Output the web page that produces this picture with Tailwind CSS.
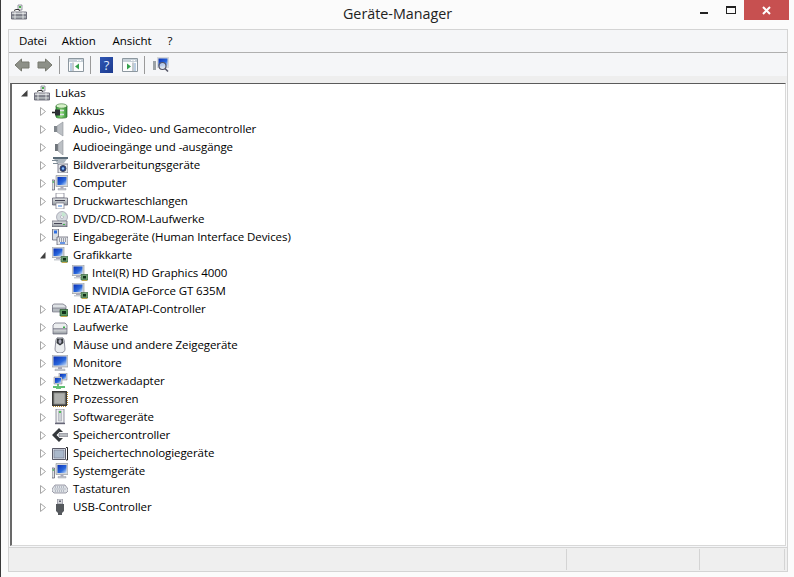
<!DOCTYPE html>
<html lang="de">
<head>
  <meta charset="UTF-8" />
  <title>Geräte-Manager</title>
  <script src="https://cdn.jsdelivr.net/npm/@tailwindcss/browser@4"></script>
</head>
<body class="overflow-hidden bg-[#fbfbfb]">
  <!-- shared icons -->
  <svg width="0" height="0" class="absolute">
    <defs>
      <linearGradient id="scr" x1="0" y1="0" x2="1" y2="1"><stop offset="0" stop-color="#0b2fb4"/><stop offset="0.6" stop-color="#2a68dc"/><stop offset="1" stop-color="#d5e6f9"/></linearGradient>
      <linearGradient id="metal" x1="0" y1="0" x2="0" y2="1"><stop offset="0" stop-color="#e4e6e8"/><stop offset="1" stop-color="#8f959b"/></linearGradient>
      <linearGradient id="helpbg" x1="0" y1="0" x2="1" y2="1"><stop offset="0" stop-color="#2f56b4"/><stop offset="1" stop-color="#1c3a8e"/></linearGradient>
      <linearGradient id="green" x1="0" y1="0" x2="1" y2="0"><stop offset="0" stop-color="#2f9a3a"/><stop offset=".45" stop-color="#8fdc7a"/><stop offset="1" stop-color="#2f8a35"/></linearGradient>
      <symbol id="host" viewBox="0 0 16 16"><path d="M7 1h4v5H7z" fill="#e8ece8" stroke="#778" stroke-width=".7"/><path d="M8 2h2v2H8z" fill="#4caf50"/><path d="M3 6.500 5 5.500h3l1 1.500" fill="none" stroke="#333"/><path d="M.500 8h15v7H.500z" fill="url(#metal)" stroke="#556" stroke-width=".8"/><path d="M1 11h14" stroke="#445"/><path d="M4 8v7M12 8v7" stroke="#fff" stroke-opacity=".7"/></symbol>
      <symbol id="battery" viewBox="0 0 16 16"><path d="M4 3h11v11c0 1.500-11 1.500-11 0z" fill="url(#green)" stroke="#2e6d2a" stroke-width=".7"/><ellipse cx="9.500" cy="3" rx="5.500" ry="2.200" fill="#d6f2c8" stroke="#2e6d2a" stroke-width=".6"/><path d="M0 9.500h3" stroke="#222" stroke-width="1.600"/><path d="M3 6.500h5v6H3z" fill="#2c3035"/><path d="M8 7.500h4M8 11.500h4" stroke="#dfe3e6" stroke-width="1.300"/></symbol>
      <symbol id="speaker" viewBox="0 0 16 16"><path d="M2 5h3v6H2z" fill="#7f858b"/><path d="M5 5 11 1v14l-6-4z" fill="#bcc0c5" stroke="#8d9298" stroke-width=".6"/></symbol>
      <symbol id="speakersm" viewBox="0 0 16 16"><path d="M3 5h3v7H3z" fill="#6f757b"/><path d="M6 5 11 1v15l-5-4z" fill="#bcc0c5" stroke="#8d9298" stroke-width=".6"/></symbol>
      <symbol id="imaging" viewBox="0 0 16 16"><path d="M1 0h15v2H1z" fill="#5a6b78"/><path d="M2 2h13l-3 4H5z" fill="#aeb8c0"/><path d="M0 3h6v1H0zM1 6h5v1H1z" fill="#7d8a94"/><path d="M6 7h10v9H6z" fill="#e4e8ec" stroke="#667" stroke-width=".8"/><circle cx="11" cy="11.500" r="3" fill="#1b3f8f" stroke="#445"/><circle cx="11" cy="11.500" r="1.200" fill="#8fc0f0"/></symbol>
      <symbol id="computer" viewBox="0 0 16 16"><path d="M4 .5h12v11H4z" fill="#d4d7da" stroke="#8a8f94" stroke-width=".6"/><path d="M5.500 2h9v8h-9z" fill="url(#scr)"/><path d="M8.500 11.500h3v2h-3z" fill="#aab"/><path d="M6 13.500h8v1.500H6z" fill="#c8ccd0" stroke="#889" stroke-width=".4"/><path d="M0 5h2.500v10H0z" fill="#dfe2e4" stroke="#556" stroke-width=".7"/><path d="M.7 6h1v2h-1z" fill="#3bb04a"/></symbol>
      <symbol id="printer" viewBox="0 0 16 16"><path d="M4 0h8v5H4z" fill="#fff" stroke="#778" stroke-width=".7"/><path d="M0.500 5h15v7h-15z" fill="url(#metal)" stroke="#556" stroke-width=".7"/><path d="M3 7h10v1H3z" fill="#445"/><path d="M4 10h8v6H4z" fill="#fff" stroke="#778" stroke-width=".7"/><path d="M6 13h4" stroke="#3a7bd5"/></symbol>
      <symbol id="dvd" viewBox="0 0 16 16"><circle cx="10" cy="6" r="5.500" fill="#d5dade" stroke="#889" stroke-width=".6"/><circle cx="10" cy="6" r="1.500" fill="#fff" stroke="#889" stroke-width=".5"/><path d="M10 1a5 5 0 0 1 4 3l-4 2z" fill="#c5e7d0"/><path d="M0 10h15v6H0z" fill="url(#metal)" stroke="#556" stroke-width=".7"/><path d="M2 12.500h8" stroke="#445"/><path d="M11 13h2v1h-2z" fill="#3bb04a"/></symbol>
      <symbol id="hid" viewBox="0 0 16 16"><path d="M.5 0h6v11h-6z" fill="#d8dde2" stroke="#556" stroke-width=".7"/><path d="M2 1.500h3v3H2z" fill="#2f6fe0"/><path d="M5 8h11v8H5z" fill="#e4e7ea" stroke="#556" stroke-width=".7"/><path d="M7 10h7M7 12h7" stroke="#556" stroke-dasharray="1 1"/><path d="M8 14h5" stroke="#2f6fe0" stroke-width="1.400"/></symbol>
      <symbol id="gpu" viewBox="0 0 16 16"><path d="M0 0h12v10.500H0z" fill="#d4d7da" stroke="#8a8f94" stroke-width=".6"/><path d="M1.500 1.500h9V9h-9z" fill="url(#scr)"/><path d="M4 10.500h4V12H4z" fill="#aab"/><path d="M2 12h7v1.500H2z" fill="#c8ccd0"/><path d="M9 9.500h7V15H9z" fill="#6f9f72" stroke="#2c5a34" stroke-width=".6"/><path d="M11 11h3v2.500h-3z" fill="#10301a"/><path d="M10 15.500h5" stroke="#c2a84a"/></symbol>
      <symbol id="ide" viewBox="0 0 16 16"><path d="M0.500 4 2 3h9l3 2v5H.500z" fill="#dde1e4" stroke="#667" stroke-width=".7"/><path d="M.500 7h13v4H.500z" fill="#b5babf" stroke="#667" stroke-width=".6"/><path d="M8 8.500h8V15H8z" fill="#5d9a63" stroke="#1c4a25" stroke-width=".6"/><path d="M10 10h4v3h-4z" fill="#10301a"/><path d="M9 15.500h6" stroke="#c2a84a"/></symbol>
      <symbol id="drive" viewBox="0 0 16 16"><path d="M1 6 3 4h10l2 2v4H1z" fill="#eceeef" stroke="#667" stroke-width=".7"/><path d="M1 10h14v5H1z" fill="url(#metal)" stroke="#667" stroke-width=".7"/><path d="M11 7.500h2V9h-2z" fill="#3bb04a"/></symbol>
      <symbol id="mouse" viewBox="0 0 16 16"><path d="M8 0c3.500 0 4.500 2.500 4.500 7l.5 5c0 2.500-2 4-5 4s-5-1.500-5-4l.5-5C3.500 2.500 4.500 0 8 0z" fill="#eceef0" stroke="#667" stroke-width=".7"/><path d="M5 1.500h6L11.500 6 8 8.500 4.500 6z" fill="#33373b"/><ellipse cx="8" cy="4.500" rx="1.500" ry="2.200" fill="#aab"/></symbol>
      <symbol id="monitor" viewBox="0 0 16 16"><path d="M0 0h16v12H0z" fill="#d4d7da" stroke="#8a8f94" stroke-width=".6"/><path d="M1.500 1.500h13v9h-13z" fill="url(#scr)"/><path d="M6 12h4v2H6z" fill="#aab"/><path d="M3 14h10v2H3z" fill="#c8ccd0" stroke="#99a" stroke-width=".4"/></symbol>
      <symbol id="network" viewBox="0 0 16 16"><path d="M7 0h8v7H7z" fill="#d4d7da" stroke="#778" stroke-width=".5"/><path d="M8 1h6v5H8z" fill="url(#scr)"/><path d="M2 4h8v7H2z" fill="#d4d7da" stroke="#778" stroke-width=".5"/><path d="M3 5h6v5H3z" fill="url(#scr)"/><path d="M6 11v2M1 14h12" stroke="#2faa45" stroke-width="1.400"/><path d="M4 16h5" stroke="#2faa45" stroke-width="1.400"/></symbol>
      <symbol id="cpu" viewBox="0 0 16 16"><path d="M0 0h15v15H0z" fill="#3a3a38"/><path d="M1.500 1.500h12v12h-12z" fill="#8d8f8c"/><path d="M2.500 2.500h10v10h-10z" fill="#aeb0ad"/><path d="M15.500 1v13M1 15.500h14" stroke="#b88a2c" stroke-dasharray="1 1"/></symbol>
      <symbol id="soft" viewBox="0 0 16 16"><path d="M4 0h8v14H4z" fill="#eef0f0" stroke="#778" stroke-width=".8"/><path d="M6.500 2h3v10h-3z" fill="#cfd3d6" stroke="#99a" stroke-width=".5"/><path d="M7 2h2v2H7z" fill="#52c05a"/><path d="M3 14.500h10" stroke="#667" stroke-width="1.400"/></symbol>
      <symbol id="memctl" viewBox="0 0 16 16"><path d="M0 8 7 1l4 4H7.500L4.500 8l3 3H11l-4 4z" fill="#34383c"/><path d="M7 6.500h9v3H7z" fill="#b8bcc0" stroke="#667" stroke-width=".5"/></symbol>
      <symbol id="memtech" viewBox="0 0 16 16"><path d="M.500 3.500h13v11h-13z" fill="#d8e0ea" stroke="#334" stroke-width=".8"/><path d="M2 5h10v8H2z" fill="#a9b8cb" stroke="#667" stroke-width=".5"/><path d="M14 2.500h1.500v12.500H14" stroke="#222" fill="none"/></symbol>
      <symbol id="keyboard" viewBox="0 0 16 16"><path d="M3 4h10l3 4v2l-2 2H2L0 10V8z" fill="#dfe2e6" stroke="#778" stroke-width=".7"/><path d="M3 6h10M2.500 8h11M3 10h10" stroke="#8a93a5" stroke-dasharray="1 1"/></symbol>
      <symbol id="usb" viewBox="0 0 16 16"><path d="M5.500 0h5v5h-5z" fill="#d6d9dc" stroke="#778" stroke-width=".6"/><path d="M7 1.500h2V3H7z" fill="#667"/><path d="M4 5h8v7l-2 2v2H6v-2l-2-2z" fill="#55595d"/></symbol>
      <symbol id="pane" viewBox="0 0 16 14"><path d="M.500.500h15v13H.500z" fill="#fbfcfd" stroke="#8c979f"/><path d="M1 1h14v3H1z" fill="#c6d0d8"/><path d="M9 2.500h1.500M11.500 2.500H13" stroke="#fff"/></symbol>
    </defs>
  </svg>

  <div class="flex h-[577px] w-[794px] flex-col border-l border-l-[#3a3a3a] font-['Open_Sans','Noto_Sans',sans-serif] text-[11.5px] tracking-[-0.08px] text-black">
    <!-- title bar -->
    <div class="relative flex h-[29px] shrink-0 items-center justify-center">
      <svg class="absolute left-[10px] top-[4px] h-4 w-4"><use href="#host"/></svg>
      <span class="pb-[1px] text-[14.3px] tracking-normal text-[#222]">Geräte-Manager</span>
      <div class="absolute left-[699px] top-[12px] h-[2px] w-[8px] bg-[#222]"></div>
      <div class="absolute left-[725px] top-[6px] h-[8px] w-[10px] border border-t-[2px] border-[#222]"></div>
      <div class="absolute left-[743px] top-0 flex h-[20px] w-[45px] items-center justify-center bg-[#c75050]">
        <svg width="9" height="9" viewBox="0 0 9 9"><path d="M1 1l7 7M8 1 1 8" stroke="#fff" stroke-width="2"/></svg>
      </div>
    </div>

    <!-- main frame -->
    <div class="ml-[7px] flex w-[780px] flex-1 flex-col border-x border-t border-[#d4d4d4]">
      <div class="flex h-[23px] shrink-0 items-center border-b border-b-[#b0b0b0] bg-[#f5f6f8] pl-[10px]">
        <span>Datei</span><span class="ml-[15px]">Aktion</span><span class="ml-[17px]">Ansicht</span><span class="ml-[16px]">?</span>
      </div>

      <div class="flex h-[23px] shrink-0 items-center bg-[#f5f6f8] pl-[5px]">
        <svg class="h-[16px] w-[16px]" viewBox="0 0 16 16"><path d="M1 8 7.500 2V5h7.500v6H7.500v3z" fill="#8d9088" stroke="#77796f"/></svg>
        <svg class="ml-[7px] h-[16px] w-[16px]" viewBox="0 0 16 16"><path d="M15 8 8.500 2V5H1v6h7.500v3z" fill="#8d9088" stroke="#77796f"/></svg>
        <div class="ml-[6px] h-[18px] w-px bg-[#9a9a9a]"></div>
        <svg class="ml-[8px] h-[14px] w-[16px]" viewBox="0 0 16 14"><use href="#pane" width="16" height="14"/><path d="M5 4.500v9" stroke="#8c979f"/><path d="M2 6h2M2 8h2M2 10h2M2 12h2" stroke="#7aa0c8"/><path d="M11 5.500v6L7 8.500z" fill="#32a04a"/></svg>
        <div class="ml-[6px] h-[18px] w-px bg-[#9a9a9a]"></div>
        <svg class="ml-[9px] h-[16px] w-[13px]" viewBox="0 0 13 16"><rect width="13" height="16" fill="url(#helpbg)"/><text x="6.500" y="13" text-anchor="middle" font-family="Open Sans" font-size="13" fill="#dfe8ff">?</text></svg>
        <svg class="ml-[9px] h-[14px] w-[16px]" viewBox="0 0 16 14"><use href="#pane" width="16" height="14"/><path d="M11 4.500v9" stroke="#8c979f"/><path d="M12 6h2M12 8h2M12 10h2M12 12h2" stroke="#7aa0c8"/><path d="M5 5.500v6l4-3z" fill="#32a04a"/></svg>
        <div class="ml-[6px] h-[18px] w-px bg-[#9a9a9a]"></div>
        <svg class="ml-[8px] h-[16px] w-[16px]" viewBox="0 0 16 16"><path d="M4 0h12v11H4z" fill="#d4d7da"/><path d="M5.500 1.500h9v8h-9z" fill="url(#scr)"/><path d="M0 4h3v9H0z" fill="#9ca2a6"/><circle cx="9.500" cy="9" r="3.500" fill="#d8e4f0" fill-opacity=".8" stroke="#556" stroke-width="1.200"/><path d="M12 11.500l3 3" stroke="#556" stroke-width="1.600"/></svg>
      </div>

      <div class="h-[7px] shrink-0 bg-[#eeeeee]"></div>

      <!-- device tree -->
      <div class="ml-[1px] mr-[1px] h-[463px] shrink-0 border-y border-r border-t-[#5a5a5a] border-r-[#d8d8d8] border-b-[#d8d8d8] border-l-[2px] border-l-[#696969] bg-white">
        <div class="flex h-[18px] items-center pl-[8px]">
          <svg class="ml-[1px] h-[8px] w-[7px]" viewBox="0 0 7 8"><path d="M6.500 1v6.500H0z" fill="#404040"/></svg>
          <svg class="ml-[6px] h-4 w-4"><use href="#host"/></svg>
          <span class="ml-[5px]">Lukas</span>
        </div>
        <div class="flex h-[18px] items-center pl-[28px]"><svg class="h-[9px] w-[6px]" viewBox="0 0 6 9"><path d="M.500.500 5.500 4.500.500 8.500z" fill="#fff" stroke="#a6a6a6"/></svg><svg class="ml-[6px] h-4 w-4"><use href="#battery"/></svg><span class="ml-[5px]">Akkus</span></div>
        <div class="flex h-[18px] items-center pl-[28px]"><svg class="h-[9px] w-[6px]" viewBox="0 0 6 9"><path d="M.500.500 5.500 4.500.500 8.500z" fill="#fff" stroke="#a6a6a6"/></svg><svg class="ml-[6px] h-4 w-4"><use href="#speaker"/></svg><span class="ml-[5px]">Audio-, Video- und Gamecontroller</span></div>
        <div class="flex h-[18px] items-center pl-[28px]"><svg class="h-[9px] w-[6px]" viewBox="0 0 6 9"><path d="M.500.500 5.500 4.500.500 8.500z" fill="#fff" stroke="#a6a6a6"/></svg><svg class="ml-[6px] h-4 w-4"><use href="#speakersm"/></svg><span class="ml-[5px]">Audioeingänge und -ausgänge</span></div>
        <div class="flex h-[18px] items-center pl-[28px]"><svg class="h-[9px] w-[6px]" viewBox="0 0 6 9"><path d="M.500.500 5.500 4.500.500 8.500z" fill="#fff" stroke="#a6a6a6"/></svg><svg class="ml-[6px] h-4 w-4"><use href="#imaging"/></svg><span class="ml-[5px]">Bildverarbeitungsgeräte</span></div>
        <div class="flex h-[18px] items-center pl-[28px]"><svg class="h-[9px] w-[6px]" viewBox="0 0 6 9"><path d="M.500.500 5.500 4.500.500 8.500z" fill="#fff" stroke="#a6a6a6"/></svg><svg class="ml-[6px] h-4 w-4"><use href="#computer"/></svg><span class="ml-[5px]">Computer</span></div>
        <div class="flex h-[18px] items-center pl-[28px]"><svg class="h-[9px] w-[6px]" viewBox="0 0 6 9"><path d="M.500.500 5.500 4.500.500 8.500z" fill="#fff" stroke="#a6a6a6"/></svg><svg class="ml-[6px] h-4 w-4"><use href="#printer"/></svg><span class="ml-[5px]">Druckwarteschlangen</span></div>
        <div class="flex h-[18px] items-center pl-[28px]"><svg class="h-[9px] w-[6px]" viewBox="0 0 6 9"><path d="M.500.500 5.500 4.500.500 8.500z" fill="#fff" stroke="#a6a6a6"/></svg><svg class="ml-[6px] h-4 w-4"><use href="#dvd"/></svg><span class="ml-[5px]">DVD/CD-ROM-Laufwerke</span></div>
        <div class="flex h-[18px] items-center pl-[28px]"><svg class="h-[9px] w-[6px]" viewBox="0 0 6 9"><path d="M.500.500 5.500 4.500.500 8.500z" fill="#fff" stroke="#a6a6a6"/></svg><svg class="ml-[6px] h-4 w-4"><use href="#hid"/></svg><span class="ml-[5px]">Eingabegeräte (Human Interface Devices)</span></div>
        <div class="flex h-[18px] items-center pl-[28px]"><svg class="h-[8px] w-[6px]" viewBox="0 0 6 8"><path d="M5.500 1v6.500H0z" fill="#404040"/></svg><svg class="ml-[6px] h-4 w-4"><use href="#gpu"/></svg><span class="ml-[5px]">Grafikkarte</span></div>
        <div class="flex h-[18px] items-center pl-[60px]"><svg class="h-4 w-4"><use href="#gpu"/></svg><span class="ml-[4px]">Intel(R) HD Graphics 4000</span></div>
        <div class="flex h-[18px] items-center pl-[60px]"><svg class="h-4 w-4"><use href="#gpu"/></svg><span class="ml-[4px]">NVIDIA GeForce GT 635M</span></div>
        <div class="flex h-[18px] items-center pl-[28px]"><svg class="h-[9px] w-[6px]" viewBox="0 0 6 9"><path d="M.500.500 5.500 4.500.500 8.500z" fill="#fff" stroke="#a6a6a6"/></svg><svg class="ml-[6px] h-4 w-4"><use href="#ide"/></svg><span class="ml-[5px]">IDE ATA/ATAPI-Controller</span></div>
        <div class="flex h-[18px] items-center pl-[28px]"><svg class="h-[9px] w-[6px]" viewBox="0 0 6 9"><path d="M.500.500 5.500 4.500.500 8.500z" fill="#fff" stroke="#a6a6a6"/></svg><svg class="ml-[6px] h-4 w-4"><use href="#drive"/></svg><span class="ml-[5px]">Laufwerke</span></div>
        <div class="flex h-[18px] items-center pl-[28px]"><svg class="h-[9px] w-[6px]" viewBox="0 0 6 9"><path d="M.500.500 5.500 4.500.500 8.500z" fill="#fff" stroke="#a6a6a6"/></svg><svg class="ml-[6px] h-4 w-4"><use href="#mouse"/></svg><span class="ml-[5px]">Mäuse und andere Zeigegeräte</span></div>
        <div class="flex h-[18px] items-center pl-[28px]"><svg class="h-[9px] w-[6px]" viewBox="0 0 6 9"><path d="M.500.500 5.500 4.500.500 8.500z" fill="#fff" stroke="#a6a6a6"/></svg><svg class="ml-[6px] h-4 w-4"><use href="#monitor"/></svg><span class="ml-[5px]">Monitore</span></div>
        <div class="flex h-[18px] items-center pl-[28px]"><svg class="h-[9px] w-[6px]" viewBox="0 0 6 9"><path d="M.500.500 5.500 4.500.500 8.500z" fill="#fff" stroke="#a6a6a6"/></svg><svg class="ml-[6px] h-4 w-4"><use href="#network"/></svg><span class="ml-[5px]">Netzwerkadapter</span></div>
        <div class="flex h-[18px] items-center pl-[28px]"><svg class="h-[9px] w-[6px]" viewBox="0 0 6 9"><path d="M.500.500 5.500 4.500.500 8.500z" fill="#fff" stroke="#a6a6a6"/></svg><svg class="ml-[6px] h-4 w-4"><use href="#cpu"/></svg><span class="ml-[5px]">Prozessoren</span></div>
        <div class="flex h-[18px] items-center pl-[28px]"><svg class="h-[9px] w-[6px]" viewBox="0 0 6 9"><path d="M.500.500 5.500 4.500.500 8.500z" fill="#fff" stroke="#a6a6a6"/></svg><svg class="ml-[6px] h-4 w-4"><use href="#soft"/></svg><span class="ml-[5px]">Softwaregeräte</span></div>
        <div class="flex h-[18px] items-center pl-[28px]"><svg class="h-[9px] w-[6px]" viewBox="0 0 6 9"><path d="M.500.500 5.500 4.500.500 8.500z" fill="#fff" stroke="#a6a6a6"/></svg><svg class="ml-[6px] h-4 w-4"><use href="#memctl"/></svg><span class="ml-[5px]">Speichercontroller</span></div>
        <div class="flex h-[18px] items-center pl-[28px]"><svg class="h-[9px] w-[6px]" viewBox="0 0 6 9"><path d="M.500.500 5.500 4.500.500 8.500z" fill="#fff" stroke="#a6a6a6"/></svg><svg class="ml-[6px] h-4 w-4"><use href="#memtech"/></svg><span class="ml-[5px]">Speichertechnologiegeräte</span></div>
        <div class="flex h-[18px] items-center pl-[28px]"><svg class="h-[9px] w-[6px]" viewBox="0 0 6 9"><path d="M.500.500 5.500 4.500.500 8.500z" fill="#fff" stroke="#a6a6a6"/></svg><svg class="ml-[6px] h-4 w-4"><use href="#computer"/></svg><span class="ml-[5px]">Systemgeräte</span></div>
        <div class="flex h-[18px] items-center pl-[28px]"><svg class="h-[9px] w-[6px]" viewBox="0 0 6 9"><path d="M.500.500 5.500 4.500.500 8.500z" fill="#fff" stroke="#a6a6a6"/></svg><svg class="ml-[6px] h-4 w-4"><use href="#keyboard"/></svg><span class="ml-[5px]">Tastaturen</span></div>
        <div class="flex h-[18px] items-center pl-[28px]"><svg class="h-[9px] w-[6px]" viewBox="0 0 6 9"><path d="M.500.500 5.500 4.500.500 8.500z" fill="#fff" stroke="#a6a6a6"/></svg><svg class="ml-[6px] h-4 w-4"><use href="#usb"/></svg><span class="ml-[5px]">USB-Controller</span></div>
      </div>

      <div class="h-px shrink-0 bg-[#f5f6f8]"></div>

      <!-- status bar -->
      <div class="flex h-[25px] shrink-0 items-stretch border-y border-[#d4d4d4] bg-[#efefef] py-[1px]">
        <div class="w-[558px] border-r border-r-[#d4d4d4]"></div>
        <div class="w-[133px] border-r border-r-[#d4d4d4]"></div>
        <div class="w-[85px] border-r border-r-[#d4d4d4]"></div>
      </div>
    </div>
    <div class="h-[6px] shrink-0"></div>
  </div>
</body>
</html>
